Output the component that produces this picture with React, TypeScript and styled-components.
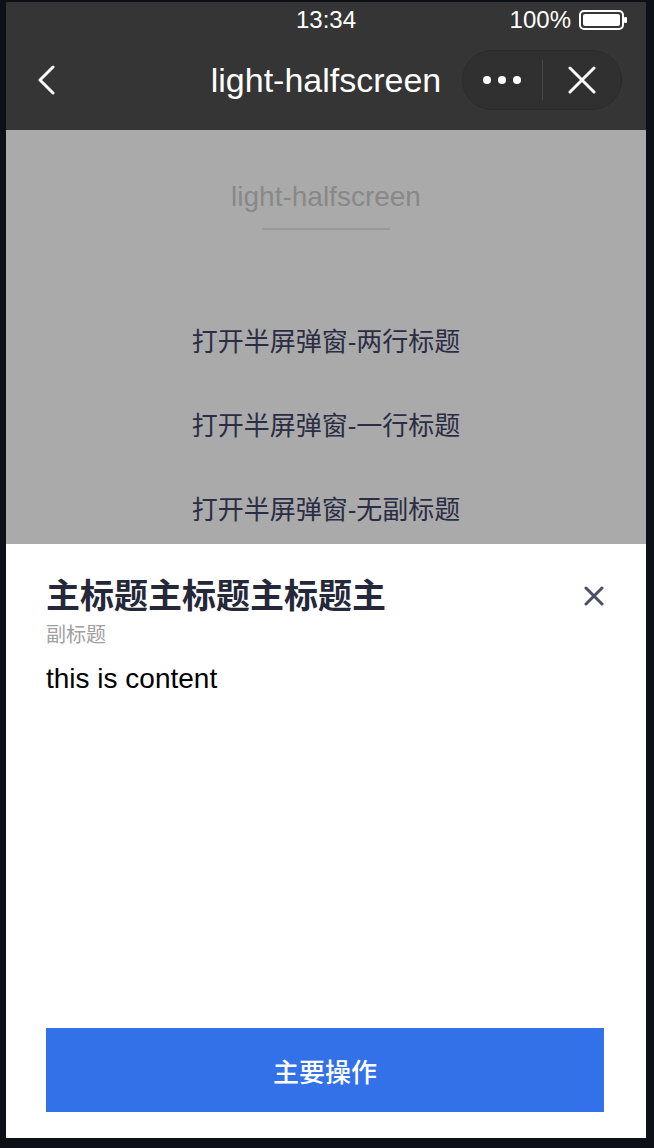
import styled, { createGlobalStyle } from "styled-components";

const GlobalStyle = createGlobalStyle`
  html, body {
    margin: 0;
    padding: 0;
    background: #0d1117;
  }
  body {
    font-family: "Liberation Sans", "Noto Sans CJK SC", sans-serif;
  }
`

const Screen = styled.div`
  width: 640px;
  height: 1136px;
  margin: 2px 0 0 6px;
  display: flex;
  flex-direction: column;
  overflow: hidden;
  background: #ffffff;
`

const Header = styled.header`
  background: #353535;
  color: #ffffff;
`

const StatusBar = styled.div`
  height: 36px;
  display: grid;
  grid-template-columns: 1fr auto 1fr;
  align-items: center;
  font-size: 24px;
`

const Time = styled.span`
  grid-column: 2;
`

const Battery = styled.div`
  grid-column: 3;
  justify-self: end;
  display: flex;
  align-items: center;
  gap: 8px;
  padding-right: 17px;
`

const NavBar = styled.div`
  height: 84px;
  padding-bottom: 8px;
  display: grid;
  grid-template-columns: 1fr auto 1fr;
  align-items: center;
`

const BackButton = styled.div`
  padding-left: 30px;
  display: flex;
  align-items: center;
`

const NavTitle = styled.h1`
  margin: 0;
  font-size: 34px;
  font-weight: normal;
  line-height: 44px;
`

const Capsule = styled.div`
  justify-self: end;
  margin-right: 24px;
  width: 160px;
  height: 60px;
  box-sizing: border-box;
  border-radius: 30px;
  background: #303030;
  border: 1px solid #2b2b2b;
  display: flex;
  align-items: center;
`

const CapsuleHalf = styled.div`
  flex: 1;
  display: flex;
  align-items: center;
  justify-content: center;
  gap: 7px;
`

const Dot = styled.span`
  width: 8px;
  height: 8px;
  border-radius: 50%;
  background: #ffffff;
`

const Divider = styled.span`
  width: 1px;
  height: 40px;
  background: #474747;
`

const Page = styled.main`
  height: 414px;
  background: #aaaaaa;
  display: flex;
  flex-direction: column;
  align-items: center;
  padding-top: 47px;
  box-sizing: border-box;
`

const PageTitle = styled.div`
  font-size: 28px;
  line-height: 40px;
  color: #888888;
`

const Underline = styled.div`
  width: 128px;
  height: 2px;
  margin-top: 11px;
  background: #999999;
`

const MenuList = styled.ul`
  list-style: none;
  margin: 92px 0 0;
  padding: 0;
  display: flex;
  flex-direction: column;
  align-items: center;
  gap: 44px;
`

const MenuItem = styled.li`
  font-size: 26px;
  line-height: 40px;
  color: #2a2d44;
`

const Sheet = styled.section`
  flex: 1;
  display: flex;
  flex-direction: column;
  padding: 28px 42px 26px 40px;
  background: #ffffff;
`

const SheetHead = styled.div`
  display: flex;
  justify-content: space-between;
  align-items: flex-start;
`

const SheetTitle = styled.h2`
  margin: 0;
  font-size: 34px;
  line-height: 48px;
  font-weight: bold;
  color: #252838;
`

const CloseButton = styled.div`
  height: 48px;
  display: flex;
  align-items: center;
`

const SubTitle = styled.div`
  margin-top: 1px;
  font-size: 20px;
  line-height: 28px;
  color: #a0a0a0;
`

const Content = styled.div`
  margin-top: 10px;
  font-size: 28px;
  line-height: 40px;
  color: #000000;
`

const Spacer = styled.div`
  flex: 1;
`

const PrimaryButton = styled.button`
  height: 84px;
  border: none;
  border-radius: 0;
  background: #3371e8;
  color: #ffffff;
  font-family: inherit;
  font-size: 26px;
  font-weight: 500;
`

const menus = ["打开半屏弹窗-两行标题", "打开半屏弹窗-一行标题", "打开半屏弹窗-无副标题"]

function App() {
    return (
        <>
            <GlobalStyle/>
            <Screen>
                <Header>
                    <StatusBar>
                        <Time>13:34</Time>
                        <Battery>
                            <span>100%</span>
                            <svg width="50" height="20" viewBox="0 0 50 20">
                                <rect x="1" y="1" width="43" height="18" rx="4" fill="none" stroke="#fff" strokeWidth="2"/>
                                <rect x="4" y="4" width="37" height="12" rx="2" fill="#fff"/>
                                <rect x="45" y="7" width="3" height="6" rx="1" fill="#fff"/>
                            </svg>
                        </Battery>
                    </StatusBar>
                    <NavBar>
                        <BackButton>
                            <svg width="20" height="30" viewBox="0 0 20 30">
                                <polyline points="17,2 4,15 17,28" fill="none" stroke="#fff" strokeWidth="3"
                                          strokeLinecap="round" strokeLinejoin="round"/>
                            </svg>
                        </BackButton>
                        <NavTitle>light-halfscreen</NavTitle>
                        <Capsule>
                            <CapsuleHalf>
                                <Dot/><Dot/><Dot/>
                            </CapsuleHalf>
                            <Divider/>
                            <CapsuleHalf>
                                <svg width="28" height="28" viewBox="0 0 28 28">
                                    <path d="M2 2 L26 26 M26 2 L2 26" stroke="#fff" strokeWidth="3" strokeLinecap="round"/>
                                </svg>
                            </CapsuleHalf>
                        </Capsule>
                    </NavBar>
                </Header>

                <Page>
                    <PageTitle>light-halfscreen</PageTitle>
                    <Underline/>
                    <MenuList>
                        {menus.map(m => <MenuItem key={m}>{m}</MenuItem>)}
                    </MenuList>
                </Page>

                <Sheet>
                    <SheetHead>
                        <SheetTitle>主标题主标题主标题主</SheetTitle>
                        <CloseButton>
                            <svg width="20" height="20" viewBox="0 0 20 20">
                                <path d="M2 2 L18 18 M18 2 L2 18" stroke="#4b4e66" strokeWidth="3" strokeLinecap="round"/>
                            </svg>
                        </CloseButton>
                    </SheetHead>
                    <SubTitle>副标题</SubTitle>
                    <Content>this is content</Content>
                    <Spacer/>
                    <PrimaryButton>主要操作</PrimaryButton>
                </Sheet>
            </Screen>
        </>
    )
}

export default App
